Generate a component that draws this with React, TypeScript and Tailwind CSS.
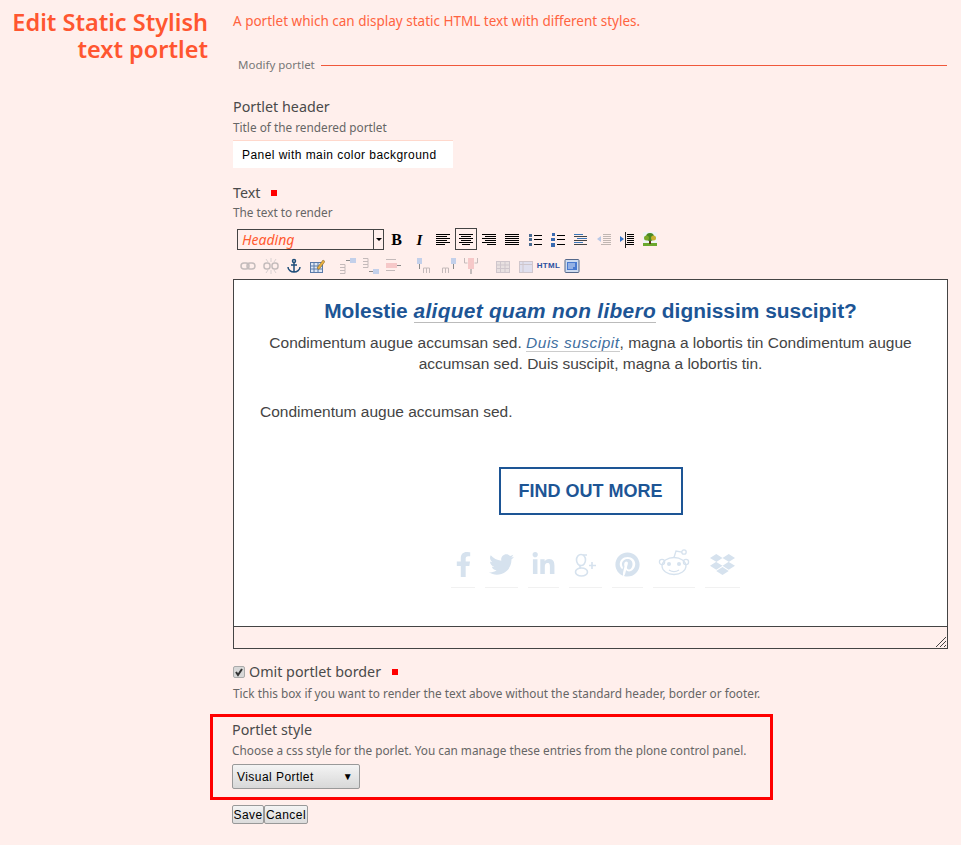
import React from 'react';
import { FaFacebookF, FaTwitter, FaLinkedinIn, FaPinterest, FaDropbox } from 'react-icons/fa';

const lines = (ys: [number, number, number][], color = '#000') => (
  <>
    {ys.map(([x, y, w], i) => <rect key={i} x={x} y={y} width={w} height="1" fill={color} />)}
  </>
);

function Align({ kind }: { kind: 'left' | 'center' | 'right' | 'full' }) {
  const rows: [number, number, number][] = {
    left: [[1, 2, 14], [1, 4, 11], [1, 6, 14], [1, 8, 11], [1, 10, 14], [1, 12, 9]],
    center: [[1, 2, 14], [3, 4, 10], [1, 6, 14], [3, 8, 10], [1, 10, 14], [4, 12, 8]],
    right: [[1, 2, 14], [4, 4, 11], [1, 6, 14], [4, 8, 11], [1, 10, 14], [6, 12, 9]],
    full: [[1, 2, 14], [1, 4, 14], [1, 6, 14], [1, 8, 14], [1, 10, 14], [1, 12, 14]],
  }[kind] as [number, number, number][];
  return <svg width="16" height="16">{lines(rows)}</svg>;
}

function Tool({ children, active }: { children: React.ReactNode; active?: boolean }) {
  return (
    <div className="w-[23px] h-[22px] flex items-center justify-center shrink-0">
      <div className={`w-[22px] h-[22px] pt-[2px] flex items-center justify-center ${active ? 'border border-[#444]' : ''}`}>{children}</div>
    </div>
  );
}

const stub = '#c4baba';
const cell = '#c3d0ea';

// faded table row / column tools
function RowIcon({ kind }: { kind: 'before' | 'after' | 'delete' }) {
  return (
    <svg width="18" height="18">
      {kind === 'before' && (
        <>
          <path d="M1 7.5h5v3H1M6 10.5v3H1M6 13.5v3H1" fill="none" stroke={stub} />
          <rect x="11" y="1" width="6" height="5" fill={cell} />
          <path d="M7 3.5h4" stroke="#8a8a8a" />
        </>
      )}
      {kind === 'after' && (
        <>
          <path d="M1 1.5h5v3H1M6 4.5v3H1M6 7.5v3H1" fill="none" stroke={stub} />
          <rect x="11" y="12" width="6" height="5" fill={cell} />
          <path d="M7 14.5h4" stroke="#8a8a8a" />
        </>
      )}
      {kind === 'delete' && (
        <>
          <path d="M1 2.5h10M1 13.5h9" stroke={stub} />
          <rect x="1" y="6" width="11" height="5" fill="#f6c8c8" />
          <path d="M12 8.5h4" stroke="#8a8a8a" />
        </>
      )}
    </svg>
  );
}

function ColIcon({ kind }: { kind: 'before' | 'after' | 'delete' }) {
  return (
    <svg width="18" height="18">
      {kind === 'before' && (
        <>
          <rect x="1" y="1" width="5" height="6" fill={cell} />
          <path d="M3.5 7v5" stroke="#8a8a8a" />
          <path d="M7.5 16v-5h3v5M10.5 11h3v5" fill="none" stroke={stub} />
        </>
      )}
      {kind === 'after' && (
        <>
          <rect x="12" y="1" width="5" height="6" fill={cell} />
          <path d="M14.5 7v5" stroke="#8a8a8a" />
          <path d="M3.5 16v-5h3v5M6.5 11h3v5" fill="none" stroke={stub} />
        </>
      )}
      {kind === 'delete' && (
        <>
          <path d="M2.5 1v5h3M15.5 1v5h-3" fill="none" stroke={stub} />
          <rect x="6" y="1" width="6" height="11" fill="#f6c8c8" />
          <path d="M9 12v5" stroke="#8a8a8a" />
        </>
      )}
    </svg>
  );
}

function Social({ w, children }: { w: number; children: React.ReactNode }) {
  return (
    <div className="flex flex-col items-center border-b border-[#f1f1f1] h-[48px] pt-[12px]" style={{ width: w }}>
      {children}
    </div>
  );
}

export default function App() {
  return (
    <div className="w-[961px] h-[845px] overflow-hidden bg-[#ffefec] flex text-[#4a4a4a] font-['Noto_Sans',sans-serif]">
      <div className="w-[208px] shrink-0 pt-[9px] text-right">
        <h1 className="text-[23.5px] leading-[27px] font-semibold text-[#ff5630]">Edit Static Stylish text portlet</h1>
      </div>

      <div className="ml-[25px] w-[714px] shrink-0">
        <p className="mt-[12px] text-[13.5px] leading-[19px] text-[#ff6340]">A portlet which can display static HTML text with different styles.</p>

        <div className="mt-[19px] flex items-center h-[30px] pl-[5px]">
          <span className="text-[11.5px] text-[#777]">Modify portlet</span>
          <div className="flex-1 h-px bg-[#f0583a] ml-[6px]" />
        </div>

        <div className="mt-[17px] text-[14.3px] leading-[19px]">Portlet header</div>
        <div className="mt-[4px] text-[11.8px] leading-[15px] text-[#666]">Title of the rendered portlet</div>
        <div className="mt-[5px] w-[220px] h-[28px] bg-white border-t border-[#ffd8cc] pl-[9px] flex items-center text-[12px] tracking-[0.45px] text-black font-['Liberation_Sans',sans-serif]">
          Panel with main color background
        </div>

        <div className="mt-[15px] flex items-center text-[14.3px] leading-[19px]">
          Text <span className="ml-[11px] w-[6px] h-[6px] bg-[#f00]" />
        </div>
        <div className="mt-[3px] text-[11.8px] leading-[15px] text-[#666]">The text to render</div>

        <div className="mt-[8px] pl-[4px] flex items-center h-[22px]">
          <div className="w-[147px] h-[21px] border border-[#444] flex items-center">
            <span className="flex-1 pl-[4px] italic text-[14px] text-[#ff5a30]">Heading</span>
            <span className="w-[10px] h-full border-l border-[#444] flex items-center justify-center">
              <span className="w-0 h-0 border-x-[3px] border-x-transparent border-t-[3px] border-t-black" />
            </span>
          </div>
          <div className="ml-px flex items-center">
            <Tool><span className="font-['Liberation_Serif',serif] font-bold text-[16px] leading-none text-black">B</span></Tool>
            <Tool><span className="font-['Liberation_Serif',serif] font-bold italic text-[15px] leading-none text-black">I</span></Tool>
            <Tool><Align kind="left" /></Tool>
            <Tool active><Align kind="center" /></Tool>
            <Tool><Align kind="right" /></Tool>
            <Tool><Align kind="full" /></Tool>
            <Tool>
              <svg width="16" height="16">
                <rect x="2" y="2" width="3" height="3" fill="#4a6a90" /><rect x="2" y="6" width="3" height="3" fill="#4a6a90" /><rect x="2" y="11" width="3" height="3" fill="#4a6a90" />
                {lines([[7, 3, 8], [7, 7, 8], [7, 12, 8]])}
              </svg>
            </Tool>
            <Tool>
              <svg width="16" height="16">
                <rect x="2" y="1" width="3" height="3" fill="#3a6ab0" /><rect x="1" y="6" width="4" height="3" fill="#3a6ab0" /><rect x="1" y="11" width="4" height="4" fill="#3a6ab0" />
                {lines([[7, 3, 8], [7, 7, 8], [7, 12, 8]])}
              </svg>
            </Tool>
            <Tool>
              <svg width="16" height="16">
                {lines([[1, 2, 9], [4, 6, 10], [1, 10, 9]], '#3a76b8')}{lines([[1, 4, 13], [1, 8, 13], [1, 12, 13]], '#444')}
              </svg>
            </Tool>
            <Tool>
              <svg width="16" height="16">
                {lines([[7, 2, 8], [7, 4, 8], [7, 6, 8], [7, 8, 8], [7, 10, 8], [5, 12, 10]], '#c0b6b2')}
                <path d="M1 7l4-3v6z" fill="#b8c8e6" />
              </svg>
            </Tool>
            <Tool>
              <svg width="16" height="16">
                {lines([[8, 2, 7], [8, 4, 7], [8, 6, 7], [8, 8, 7], [8, 10, 7], [6, 12, 9]])}
                <path d="M5 7l-4-3v6z" fill="#3a76c8" />
                <rect x="6" y="0" width="1" height="16" fill="#222" />
              </svg>
            </Tool>
            <Tool>
              <svg width="16" height="16">
                <rect x="1" y="0" width="14" height="14" fill="#eef4f6" />
                <path d="M1 11h14v3H1z" fill="#6aa82e" />
                <rect x="7" y="7" width="2" height="5" fill="#5a3a1a" />
                <circle cx="8" cy="5" r="4" fill="#4a8a22" /><circle cx="4.5" cy="6" r="2.5" fill="#7aa82a" /><circle cx="11.5" cy="6" r="2.5" fill="#c8b030" />
              </svg>
            </Tool>
          </div>
        </div>

        <div className="mt-[4px] pl-[3px] flex items-center h-[22px]">
          <Tool>
            <svg width="16" height="16"><rect x="1" y="5" width="8" height="6" rx="3" fill="none" stroke="#c4bcbc" strokeWidth="1.5" /><rect x="7" y="5" width="8" height="6" rx="3" fill="none" stroke="#c4bcbc" strokeWidth="1.5" /></svg>
          </Tool>
          <Tool>
            <svg width="16" height="16"><rect x="1" y="5" width="6" height="6" rx="2.5" fill="none" stroke="#c4bcbc" strokeWidth="1.5" /><rect x="9" y="5" width="6" height="6" rx="2.5" fill="none" stroke="#c4bcbc" strokeWidth="1.5" /><path d="M8 0v4M8 12v4M3 1l2 3M13 1l-2 3M3 15l2-3M13 15l-2-3" stroke="#d8d0d0" /></svg>
          </Tool>
          <Tool>
            <svg width="16" height="16" fill="none" stroke="#1f4e79" strokeWidth="1.5"><circle cx="8" cy="3" r="1.5" /><path d="M8 4.5V14M5 7h6M2 9c0 3 3 5 6 5s6-2 6-5" /></svg>
          </Tool>
          <Tool>
            <svg width="16" height="16">
              <rect x="1.5" y="4.5" width="12" height="10" fill="#dfe8f5" stroke="#5a7aa8" />
              <path d="M1 8h13M1 11h13M5 4v10M9 4v10" stroke="#5a7aa8" />
              <path d="M8 10l6-8 2 1.5-6 8z" fill="#e8b040" stroke="#7a5a20" strokeWidth=".5" />
            </svg>
          </Tool>
          <div className="ml-[8px] flex items-center">
            <Tool><RowIcon kind="before" /></Tool>
            <Tool><RowIcon kind="after" /></Tool>
            <Tool><RowIcon kind="delete" /></Tool>
          </div>
          <div className="ml-[8px] flex items-center">
            <Tool><ColIcon kind="before" /></Tool>
            <Tool><ColIcon kind="after" /></Tool>
            <Tool><ColIcon kind="delete" /></Tool>
          </div>
          <div className="ml-[9px] flex items-center">
            <Tool>
              <svg width="16" height="16"><rect x="1.5" y="3.5" width="13" height="11" fill="#e8e0e0" stroke="#cfc6cc" /><path d="M1 7h14M1 10.5h14M5.5 3v11M10 3v11" stroke="#cfc6cc" /></svg>
            </Tool>
            <Tool>
              <svg width="16" height="16"><rect x="1.5" y="3.5" width="13" height="11" fill="#dfdfee" stroke="#cfc6cc" /><path d="M1 6.5h14M5 3v11" stroke="#cfc6cc" /></svg>
            </Tool>
            <Tool><span className="font-['Liberation_Sans',sans-serif] font-bold text-[8px] leading-none tracking-[0.3px] text-[#2a4fa0]">HTML</span></Tool>
            <Tool>
              <svg width="16" height="16"><rect x="1" y="1.5" width="14" height="13" rx="1" fill="#cfdcf0" stroke="#55688a" /><rect x="3" y="4" width="10" height="8" fill="#4a7ad0" /><path d="M4 6h7M4 8h7M4 10h5" stroke="#dfe8f8" /></svg>
            </Tool>
          </div>
        </div>

        <div className="mt-[3px] w-[715px] h-[370px] border border-[#444] flex flex-col">
          <div className="h-[346px] bg-white font-['Liberation_Sans',sans-serif] shrink-0 text-[#444]">
            <h2 className="pt-[19px] text-center text-[20.9px] leading-[24px] font-bold text-[#1d5595]">
              Molestie <em className="tracking-[0.3px] border-b border-[#bbb]">aliquet quam non libero</em> dignissim suscipit?
            </h2>
            <p className="mt-[9px] mx-auto w-[660px] text-center text-[15.5px] leading-[21px]">
              Condimentum augue accumsan sed. <em className="text-[#3f6f9f] tracking-[0.5px] border-b border-[#ccc]">Duis suscipit</em>, magna a lobortis tin Condimentum augue accumsan sed. Duis suscipit, magna a lobortis tin.
            </p>
            <p className="mt-[27px] pl-[26px] text-[15.5px] leading-[21px]">Condimentum augue accumsan sed.</p>
            <div className="mt-[45px] flex justify-center">
              <div className="w-[184px] h-[48px] border-2 border-[#1d5595] flex items-center justify-center text-[18px] font-bold text-[#1d5595]">FIND OUT MORE</div>
            </div>
            <div className="mt-[25px] pl-[10px] flex justify-center gap-[10px] text-[#d6e2ee] text-[25px]">
              <Social w={24}><FaFacebookF /></Social>
              <Social w={33}><FaTwitter /></Social>
              <Social w={31}><FaLinkedinIn /></Social>
              <Social w={33}>
                <svg width="26" height="26" viewBox="0 0 26 26" fill="none" stroke="#d6e2ee" strokeWidth="1.6">
                  <ellipse cx="8" cy="8" rx="4.5" ry="5.5" />
                  <ellipse cx="8.5" cy="20" rx="6" ry="4" />
                  <path d="M8 13.5c-2 1-1 2 0 2.5M10 3h4M19 10v7M16 13.5h7" />
                </svg>
              </Social>
              <Social w={31}><FaPinterest /></Social>
              <Social w={42}>
                <svg width="32" height="27" viewBox="0 0 32 27" fill="none" stroke="#d6e2ee" strokeWidth="1.3" className="-mt-[3px]">
                  <ellipse cx="16" cy="17" rx="12" ry="8.5" />
                  <circle cx="4" cy="13" r="2.6" /><circle cx="28" cy="13" r="2.6" />
                  <circle cx="26" cy="3" r="2.2" />
                  <path d="M16 8.5l2-6.5 6 1.2M11 21c3 2 7 2 10 0" />
                  <circle cx="11" cy="15" r="2" fill="#d6e2ee" stroke="none" /><circle cx="21" cy="15" r="2" fill="#d6e2ee" stroke="none" />
                </svg>
              </Social>
              <Social w={35}><FaDropbox /></Social>
            </div>
          </div>
          <div className="flex-1 border-t border-[#444] flex items-end justify-end">
            <svg width="12" height="12" stroke="#444"><path d="M1 11L11 1M5 11l6-6M9 11l2-2" /></svg>
          </div>
        </div>

        <div className="mt-[13px] flex items-center text-[14.3px] leading-[19px]">
          <span className="w-[12px] h-[12px] bg-[#d8d8d8] border border-[#aaa] rounded-[2px] flex items-center justify-center">
            <svg width="10" height="10" fill="none" stroke="#333" strokeWidth="2"><path d="M2 5l2 3 4-6" /></svg>
          </span>
          <span className="ml-[4px]">Omit portlet border</span>
          <span className="ml-[11px] w-[6px] h-[6px] bg-[#f00]" />
        </div>
        <div className="mt-[5px] text-[11.8px] leading-[15px] text-[#666]">Tick this box if you want to render the text above without the standard header, border or footer.</div>

        <div className="mt-[13px] -ml-[23px] w-[563px] h-[86px] border-[3px] border-[#f00] pl-[19px] pt-[3px]">
          <div className="text-[14.3px] leading-[19px]">Portlet style</div>
          <div className="mt-[4px] text-[11.8px] leading-[15px] text-[#666]">Choose a css style for the porlet. You can manage these entries from the plone control panel.</div>
          <div className="mt-[6px] w-[128px] h-[25px] rounded-[2px] border border-[#999] bg-gradient-to-b from-[#f4f4f4] to-[#d8d8d8] pl-[4px] pr-[6px] flex items-center justify-between text-[12px] tracking-[0.45px] text-black font-['Liberation_Sans',sans-serif]">
            <span>Visual Portlet</span>
            <span className="text-[10px] -mt-[1px]">▼</span>
          </div>
        </div>

        <div className="mt-[5px] -ml-px flex text-[12px] tracking-[0.45px] text-black font-['Liberation_Sans',sans-serif]">
          <button className="w-[32px] h-[19px] border border-[#999] rounded-[2px] bg-gradient-to-b from-[#f4f4f4] to-[#dcdcdc]">Save</button>
          <button className="w-[44px] h-[19px] border border-[#999] rounded-[2px] bg-gradient-to-b from-[#f4f4f4] to-[#dcdcdc]">Cancel</button>
        </div>
      </div>
    </div>
  );
}
